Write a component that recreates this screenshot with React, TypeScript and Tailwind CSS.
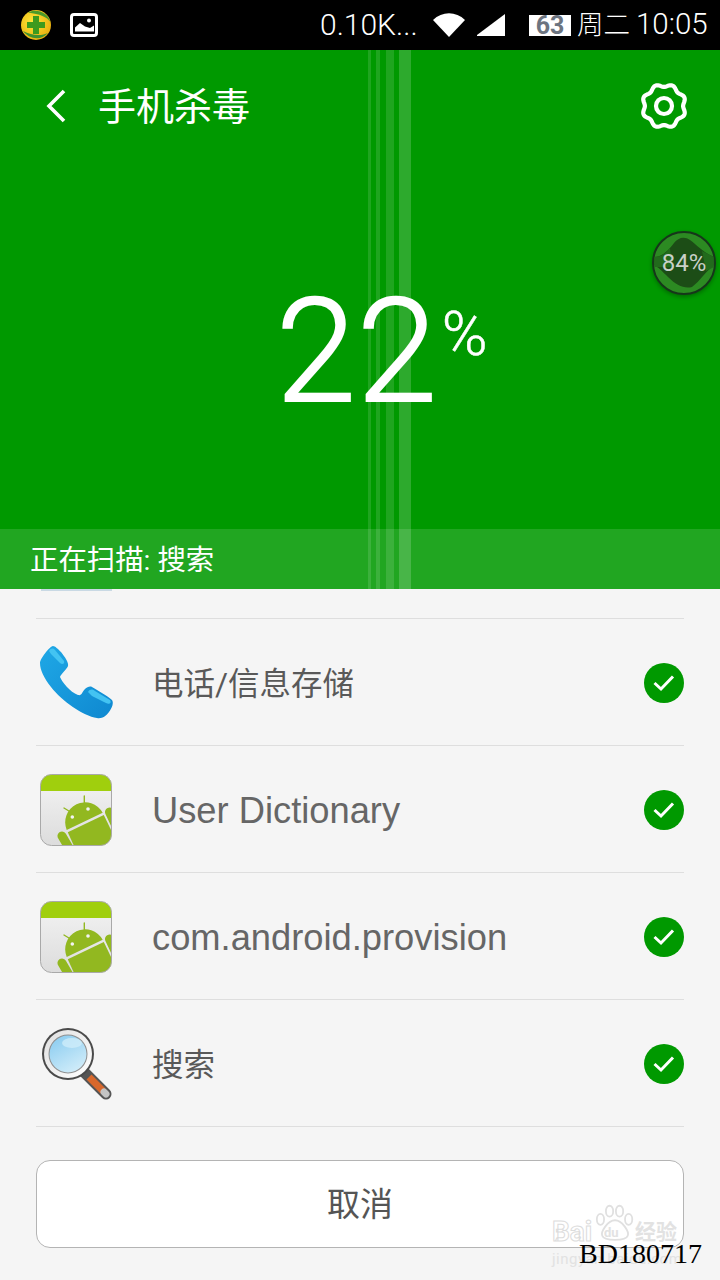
import React from "react";

const FONT = "[font-family:Roboto,'Noto_Sans_CJK_SC',sans-serif]";

function gearPath() {
  const pts: string[] = [];
  const n = 160;
  for (let i = 0; i <= n; i++) {
    const t = (i / n) * Math.PI * 2;
    const r = 20.6 + 1.5 * Math.cos(8 * (t + Math.PI / 8));
    pts.push(`${(24 + r * Math.cos(t)).toFixed(2)},${(24 + r * Math.sin(t)).toFixed(2)}`);
  }
  return "M" + pts.join("L") + "Z";
}

function Logo360() {
  return (
    <svg width="32" height="32" viewBox="0 0 32 32">
      <defs>
        <radialGradient id="ly" cx="0.4" cy="0.4" r="0.7">
          <stop offset="0" stopColor="#ffe93a" />
          <stop offset="1" stopColor="#e8a90a" />
        </radialGradient>
      </defs>
      <circle cx="16" cy="16" r="15" fill="url(#ly)" />
      <path d="M8 3.5C16 -1 28 3 30.5 13C27 8 20 5 8 3.5Z" fill="#4a9a2a" />
      <path d="M3 22C8 29 20 33 28 24C22 27 12 27 3 22Z" fill="#3f9030" />
      <path d="M13 7h6v6h6v6h-6v6h-6v-6H7v-6h6z" fill="#3d9a1e" />
    </svg>
  );
}

function AndroidIcon() {
  return (
    <svg width="72" height="72" viewBox="0 0 72 72">
      <defs>
        <linearGradient id="abg" x1="0" y1="0" x2="0" y2="1">
          <stop offset="0" stopColor="#f4f4f4" />
          <stop offset="1" stopColor="#dcdcdc" />
        </linearGradient>
        <clipPath id="acl">
          <rect x="0.5" y="0.5" width="71" height="71" rx="11" />
        </clipPath>
      </defs>
      <g clipPath="url(#acl)">
        <rect width="72" height="72" fill="url(#abg)" />
        <rect width="72" height="17" fill="#a0cf0d" />
        <g fill="#92b820">
          <path d="M26.7 56A20 20 0 0 1 62.7 38.7Z" />
          <path d="M27.8 58.2L63.8 41L74 62V76H36L34 72Z" />
        </g>
        <g stroke="#92b820" fill="none" strokeLinecap="round">
          <path d="M69.5 38L77 54" strokeWidth="9" />
          <path d="M22 62L29 74" strokeWidth="9" />
          <path d="M44.3 22V30M24 34L30.5 38" strokeWidth="1.4" />
        </g>
        <circle cx="32.3" cy="43" r="1.8" fill="#f3f3f3" />
        <circle cx="48" cy="35" r="1.8" fill="#f3f3f3" />
      </g>
      <rect x="0.5" y="0.5" width="71" height="71" rx="11" fill="none" stroke="#a9a9a9" />
    </svg>
  );
}

function PhoneIcon() {
  return (
    <svg width="74" height="74" viewBox="0 0 74 74">
      <defs>
        <linearGradient id="pg" x1="0" y1="0" x2="1" y2="1">
          <stop offset="0" stopColor="#1fa8e6" />
          <stop offset="1" stopColor="#0f88d0" />
        </linearGradient>
      </defs>
      <path
        d="M0 17C0 13 9 1 13 0C15 0 18 3 21 6C25 11 29 17 28 20C27 23 21 28 20 31C22 36 30 46 38 49C42 50 42 46 45 43C47 41 50 40 52 41C57 44 68 50 72 54C74 57 72 62 69 66C66 70 62 73 57 72C43 70 22 55 11 41C4 32 0 24 0 17Z"
        fill="url(#pg)"
      />
      <path d="M9 5C11 2 13 2 15 4L24 15C25 18 22 19 20 17L11 8Z" fill="#43c3f2" />
      <path d="M48 46C50 43 52 43 55 45L70 54C72 57 69 59 66 57L52 50Z" fill="#43c3f2" />
    </svg>
  );
}

function SearchIcon() {
  return (
    <svg width="72" height="72" viewBox="0 0 72 72">
      <defs>
        <linearGradient id="sb" x1="0.2" y1="0" x2="0.8" y2="1">
          <stop offset="0" stopColor="#8ccdf0" />
          <stop offset="1" stopColor="#d4eefa" />
        </linearGradient>
        <linearGradient id="sr" x1="0" y1="0" x2="1" y2="1">
          <stop offset="0" stopColor="#e0e0e0" />
          <stop offset="1" stopColor="#ffffff" />
        </linearGradient>
      </defs>
      <path d="M44 44L66 66" stroke="#555" strokeWidth="11" strokeLinecap="round" />
      <path d="M49 49L63 63" stroke="#d8682c" strokeWidth="7" />
      <path d="M64 64L66 66" stroke="#c4c4c4" strokeWidth="7" strokeLinecap="round" />
      <circle cx="28" cy="26" r="26" fill="#4a4a4a" />
      <circle cx="28" cy="26" r="24" fill="url(#sr)" />
      <circle cx="28" cy="26" r="19.5" fill="#8f8f8f" />
      <circle cx="28" cy="26" r="18.5" fill="url(#sb)" />
      <ellipse cx="32" cy="15" rx="10" ry="5" fill="#d4effb" opacity="0.7" />
    </svg>
  );
}

function Check() {
  return (
    <div className="w-10 h-10 rounded-full bg-[#009900] flex items-center justify-center shrink-0">
      <svg width="24" height="20" viewBox="0 0 24 20" fill="none">
        <path d="M2.5 10L9 16L21 3.5" stroke="#fff" strokeWidth="3" />
      </svg>
    </div>
  );
}

function Row({ icon, label, latin }: { icon: React.ReactNode; label: string; latin?: boolean }) {
  return (
    <div className="h-[127px] border-b border-[#dedede] flex items-center pt-[1px]">
      <div className="w-[117px] flex pl-[4px] shrink-0">{icon}</div>
      <div
        className={
          latin
            ? "flex-1 text-[#666666] text-[36.3px] leading-none pt-[4px] -ml-[1px] [font-family:'Liberation_Sans',sans-serif]"
            : "flex-1 text-[#595959] text-[31.5px] leading-none pt-[4px] -ml-[1px]"
        }
      >
        {label}
      </div>
      <Check />
    </div>
  );
}

export default function App() {
  return (
    <div className={`${FONT} relative w-[720px] h-[1280px] overflow-hidden bg-[#f5f5f5] flex flex-col`}>
      {/* status bar */}
      <div className="h-[50px] bg-black flex items-center text-white shrink-0 relative">
        <div className="ml-[20px]">
          <Logo360 />
        </div>
        <svg className="ml-[18px]" width="28" height="24" viewBox="0 0 28 24">
          <rect x="1.5" y="1.5" width="25" height="21" rx="2.5" fill="none" stroke="#fff" strokeWidth="3" />
          <path d="M5 18.5V14.5L10 10L15 13.5L20 15L24 12.5V18.5Z" fill="#fff" />
          <circle cx="19" cy="7.5" r="2" fill="#fff" />
        </svg>
        <div className="ml-[222px] w-[112px] text-[30px] leading-none font-light">0.10K...</div>
        <svg width="34" height="26" viewBox="0 0 34 26">
          <path d="M1 8C10 -1 24 -1 33 8L17 25Z" fill="#fff" />
        </svg>
        <svg className="ml-[10px]" width="30" height="24" viewBox="0 0 30 24">
          <path d="M1 22L29 1V23H1Z" fill="#fff" />
        </svg>
        <div className="ml-[23px] w-[42px] h-[21px] bg-white flex items-center justify-center text-[#6c7480] text-[25px] font-bold leading-none">
          63
        </div>
        <div className="ml-[6px] text-[26.5px] leading-none font-light whitespace-nowrap">周二</div>
        <div className="ml-[6px] text-[29.5px] leading-none font-light whitespace-nowrap">10:05</div>
      </div>

      {/* green header */}
      <div className="h-[539px] bg-[#009900] relative shrink-0 flex flex-col">
        <div className="absolute inset-y-0 left-[368px] w-[3px] bg-[#1fa51f]" />
        <div className="absolute inset-y-0 left-[376px] w-[4px] bg-[#1fa51f]" />
        <div className="absolute inset-y-0 left-[386px] w-[8px] bg-[#1fa51f]" />
        <div className="absolute inset-y-0 left-[399px] w-[12px] bg-[#2daa2d]" />

        <div className="relative flex items-center h-[112px] text-white">
          <svg className="ml-[45px]" width="22" height="34" viewBox="0 0 22 34" fill="none">
            <path d="M19 2L4 17L19 32" stroke="#fff" strokeWidth="3.6" />
          </svg>
          <div className="ml-[31px] text-[38px] leading-none pt-[1px]">手机杀毒</div>
          <svg className="ml-auto mr-[32px]" width="48" height="48" viewBox="0 0 48 48" fill="none">
            <path d={gearPath()} stroke="#fff" strokeWidth="4.2" />
            <circle cx="24" cy="24" r="8" stroke="#fff" strokeWidth="4.2" />
          </svg>
        </div>

        <div className="relative flex-1 flex items-start text-white">
          <div className="flex items-start ml-[276px] mt-[117px]">
            <span className="text-[144px] leading-[146px] tracking-[1px] font-light [-webkit-text-stroke:2px_#fff]">22</span>
            <span className="text-[62px] leading-[62px] mt-[24px] ml-[4px] font-light [-webkit-text-stroke:0.5px_#fff]">%</span>
          </div>
        </div>

        <div className="relative h-[60px] bg-white/[.13] flex items-center pl-[30px] pt-[5px] text-white text-[28.4px] leading-none">
          正在扫描: 搜索
        </div>
      </div>

      {/* list */}
      <div className="px-[36px] flex flex-col">
        <div className="h-[30px] border-b border-[#dedede]">
          <div className="ml-[5px] w-[71px] h-[2px] bg-[#c9d9e4]" />
        </div>
        <Row icon={<PhoneIcon />} label="电话/信息存储" />
        <Row icon={<AndroidIcon />} label="User Dictionary" latin />
        <Row icon={<AndroidIcon />} label="com.android.provision" latin />
        <Row icon={<SearchIcon />} label="搜索" />
        <button className="mt-[33px] h-[88px] rounded-[14px] border border-[#b4b4b4] bg-white text-[#555] text-[33px] leading-none">
          取消
        </button>
      </div>

      {/* floating ball */}
      <div className="absolute left-[652px] top-[231px] w-[64px] h-[64px] rounded-full bg-[#2c8a22] border-[2px] border-[#16361a] overflow-hidden flex items-center justify-center shadow-[0_2px_4px_rgba(0,0,0,0.3)]">
        <svg className="absolute inset-0" width="60" height="60" viewBox="0 0 60 60">
          <path d="M0 24C8 24 14 18 20 10C24 5 30 3 36 7C44 13 50 20 60 24V32C52 38 46 48 38 54C30 56 22 52 14 44C8 38 4 34 0 32Z" fill="#1c4d16" />
          <path d="M0 24C8 24 12 20 16 15L18 34L0 34Z" fill="#226a1c" />
          <path d="M48 18C52 20 56 22 60 24V34L52 38Z" fill="#226a1c" />
        </svg>
        <span className="relative text-[#c8d0c8] text-[24px] leading-none">84%</span>
      </div>

      {/* baidu watermark */}
      <div className="absolute left-[552px] top-[1203px] w-[130px] h-[64px] text-[#e2e2e2] pointer-events-none">
        <div className="absolute left-0 top-[15px] text-[28px] leading-none font-bold text-transparent [-webkit-text-stroke:1px_#dcdcdc]">Bai</div>
        <svg className="absolute left-[43px] top-0" width="40" height="40" viewBox="0 0 44 40" fill="none" stroke="#e0e0e0" strokeWidth="2">
          <ellipse cx="6" cy="16" rx="4" ry="6" />
          <ellipse cx="16" cy="7" rx="4" ry="6" />
          <ellipse cx="27" cy="7" rx="4" ry="6" />
          <ellipse cx="37" cy="16" rx="4" ry="6" />
          <path d="M22 17C14 17 6 30 8 34C10 40 34 40 36 34C38 30 30 17 22 17Z" />
        </svg>
        <div className="absolute left-[52px] top-[23px] text-[13px] leading-none font-bold">du</div>
        <div className="absolute left-[83px] top-[19px] text-[21px] leading-none font-bold whitespace-nowrap">经验</div>
        <div className="absolute left-0 top-[49px] text-[15px] leading-none whitespace-nowrap tracking-[0.5px]">jingyan.baidu.com</div>
      </div>
      <div className="absolute left-[579px] top-[1239px] text-black text-[28px] leading-[30px] [font-family:'Liberation_Serif',serif]">
        BD180717
      </div>
    </div>
  );
}
